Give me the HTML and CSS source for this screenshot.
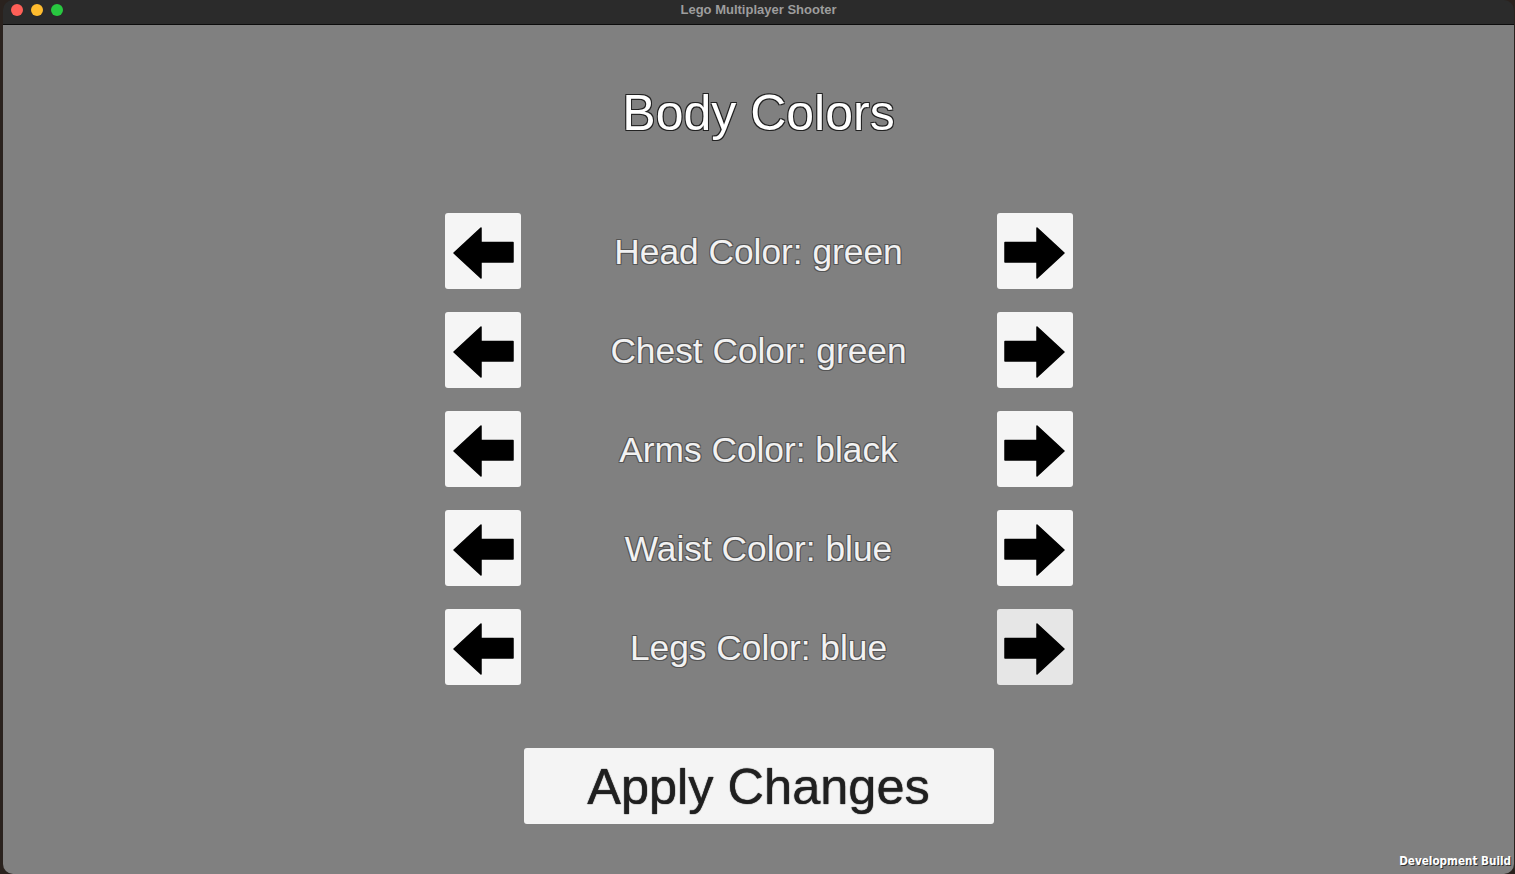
FILE: index.html
```html
<!DOCTYPE html>
<html>
<head>
<meta charset="utf-8">
<title>Lego Multiplayer Shooter</title>
<link rel="stylesheet" href="styles.css">
</head>
<body>
<div class="window">
  <div class="titlebar">
    <div class="lights">
      <span class="light red"></span>
      <span class="light yellow"></span>
      <span class="light green"></span>
    </div>
    <div class="wintitle">Lego Multiplayer Shooter</div>
  </div>
  <div class="game">
    <h1 class="heading">Body Colors</h1>
    <div class="rows">
      <div class="row">
        <button class="arrow-btn"><svg viewBox="0 0 76 76" width="76" height="76"><path class="arr" d="M9 40 L36 15 L36 29.5 L68 29.5 L68 49 L36 49 L36 65 Z"/></svg></button>
        <div class="label">Head Color: green</div>
        <button class="arrow-btn"><svg viewBox="0 0 76 76" width="76" height="76"><path class="arr" d="M67 40 L40 15 L40 29.5 L8 29.5 L8 49 L40 49 L40 65 Z"/></svg></button>
      </div>
      <div class="row">
        <button class="arrow-btn"><svg viewBox="0 0 76 76" width="76" height="76"><path class="arr" d="M9 40 L36 15 L36 29.5 L68 29.5 L68 49 L36 49 L36 65 Z"/></svg></button>
        <div class="label">Chest Color: green</div>
        <button class="arrow-btn"><svg viewBox="0 0 76 76" width="76" height="76"><path class="arr" d="M67 40 L40 15 L40 29.5 L8 29.5 L8 49 L40 49 L40 65 Z"/></svg></button>
      </div>
      <div class="row">
        <button class="arrow-btn"><svg viewBox="0 0 76 76" width="76" height="76"><path class="arr" d="M9 40 L36 15 L36 29.5 L68 29.5 L68 49 L36 49 L36 65 Z"/></svg></button>
        <div class="label">Arms Color: black</div>
        <button class="arrow-btn"><svg viewBox="0 0 76 76" width="76" height="76"><path class="arr" d="M67 40 L40 15 L40 29.5 L8 29.5 L8 49 L40 49 L40 65 Z"/></svg></button>
      </div>
      <div class="row">
        <button class="arrow-btn"><svg viewBox="0 0 76 76" width="76" height="76"><path class="arr" d="M9 40 L36 15 L36 29.5 L68 29.5 L68 49 L36 49 L36 65 Z"/></svg></button>
        <div class="label">Waist Color: blue</div>
        <button class="arrow-btn"><svg viewBox="0 0 76 76" width="76" height="76"><path class="arr" d="M67 40 L40 15 L40 29.5 L8 29.5 L8 49 L40 49 L40 65 Z"/></svg></button>
      </div>
      <div class="row">
        <button class="arrow-btn"><svg viewBox="0 0 76 76" width="76" height="76"><path class="arr" d="M9 40 L36 15 L36 29.5 L68 29.5 L68 49 L36 49 L36 65 Z"/></svg></button>
        <div class="label">Legs Color: blue</div>
        <button class="arrow-btn hover"><svg viewBox="0 0 76 76" width="76" height="76"><path class="arr" d="M67 40 L40 15 L40 29.5 L8 29.5 L8 49 L40 49 L40 65 Z"/></svg></button>
      </div>
    </div>
    <button class="apply">Apply Changes</button>
    <div class="devbuild">Development Build</div>
  </div>
</div>
</body>
</html>
```

FILE: styles.css
```css
html, body {
  margin: 0;
  padding: 0;
  height: 100%;
  background: #2a221e;
  overflow: hidden;
}

.window {
  margin-left: 3px;
  width: 1511px;
  height: 874px;
  display: flex;
  flex-direction: column;
  border-radius: 10px;
  overflow: hidden;
}

.titlebar {
  height: 24px;
  flex: 0 0 24px;
  background: #2b2b2b;
  border-bottom: 1px solid #0c0c0c;
  display: flex;
  align-items: center;
  justify-content: center;
  position: relative;
}

.lights {
  position: absolute;
  left: 8px;
  top: 4px;
  display: flex;
  gap: 8px;
}

.light {
  width: 12px;
  height: 12px;
  border-radius: 50%;
  display: block;
}
.red { background: #fe5f57; }
.yellow { background: #febc2e; }
.green { background: #28c840; }

.wintitle {
  font-family: "Liberation Sans", Arial, sans-serif;
  font-weight: bold;
  font-size: 13px;
  color: #9d9d9d;
  margin-top: -6px;
}

.game {
  flex: 1;
  background: #808080;
  display: flex;
  flex-direction: column;
  align-items: center;
  position: relative;
  padding-top: 60px;
  font-family: "Liberation Sans", Arial, sans-serif;
}

.heading {
  margin: 0;
  font-weight: normal;
  font-size: 50px;
  line-height: 57px;
  color: #ffffff;
  text-shadow: 1px 1px 0 #222, -1px -1px 0 #222, 1px -1px 0 #222, -1px 1px 0 #222;
}

.rows {
  margin-top: 71px;
  display: flex;
  flex-direction: column;
  gap: 23px;
}

.row {
  width: 628px;
  display: grid;
  grid-template-columns: 76px 1fr 76px;
  align-items: center;
}

.arrow-btn {
  width: 76px;
  height: 76px;
  padding: 0;
  margin: 0;
  border: none;
  border-radius: 3px;
  background: #f5f5f5;
  display: block;
}
.arrow-btn svg { display: block; }
.arrow-btn.hover { background: #e6e6e6; }

.arr {
  fill: #000;
  stroke: #000;
  stroke-width: 1.5;
  stroke-linejoin: round;
}

.label {
  text-align: center;
  font-size: 35.3px;
  line-height: 40px;
  padding-top: 1px;
  color: #f2f2f2;
  text-shadow: 1px 1px 0 #555, -1px -1px 0 #555, 1px -1px 0 #555, -1px 1px 0 #555;
}

.apply {
  margin-top: 63px;
  width: 470px;
  height: 76px;
  border: none;
  border-radius: 3px;
  background: #f4f4f4;
  font-family: "Liberation Sans", Arial, sans-serif;
  font-size: 50.5px;
  color: #202020;
  padding: 0;
  text-shadow: 0 0 1px #444, 0 0 1px #444;
}

.devbuild {
  position: absolute;
  right: 3px;
  bottom: 6px;
  font-family: "DejaVu Sans Condensed", "DejaVu Sans", sans-serif;
  font-weight: bold;
  font-size: 11.6px;
  color: #ffffff;
  text-shadow: 1px 1px 0 #333;
}
```
